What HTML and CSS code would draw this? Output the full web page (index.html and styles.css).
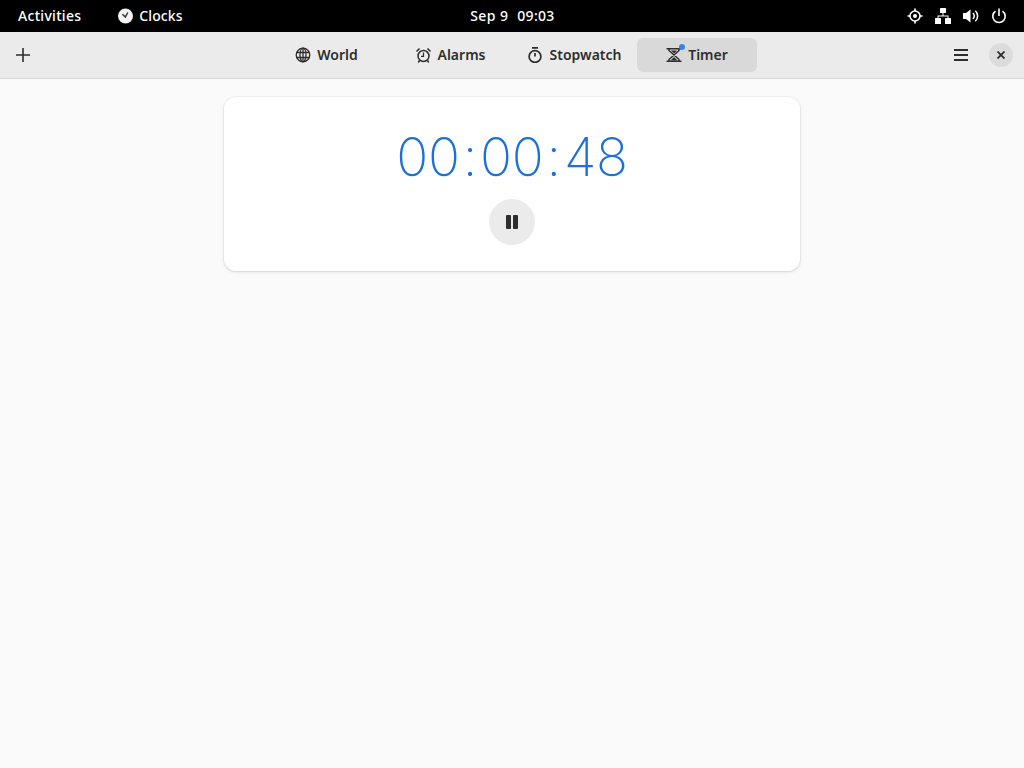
FILE: index.html
```html
<!DOCTYPE html>
<html lang="en">
<head>
    <meta charset="UTF-8">
    <meta name="viewport" content="width=device-width, initial-scale=1.0">
    <title>Clocks</title>
    <link rel="stylesheet" href="styles.css">
</head>
<body>
    <div class="top_bar">
        <div class="top_left">
            <span class="activities">Activities</span>
            <span class="app_menu">
                <svg class="app_icon" width="16" height="16" viewBox="0 0 16 16">
                    <circle cx="7.500" cy="8" r="7.500" fill="#f2f2f2"/>
                    <path d="M4.500 6.300 L7.300 9 L9.800 4.500" fill="none" stroke="#333" stroke-width="1.500"/>
                </svg>
                Clocks
            </span>
        </div>
        <div class="top_clock">Sep 9&nbsp; 09:03</div>
        <div class="top_right">
            <svg width="16" height="16" viewBox="0 0 16 16" fill="none" stroke="#fff">
                <circle cx="8" cy="8" r="5" stroke-width="1.6"/>
                <circle cx="8" cy="8" r="2" fill="#fff" stroke="none"/>
                <path d="M8 0.500V3M8 13v2.500M0.500 8H3M13 8h2.500" stroke-width="1.6"/>
            </svg>
            <svg width="16" height="16" viewBox="0 0 16 16" fill="#fff">
                <rect x="5" y="0" width="6" height="5" rx="0.5"/>
                <rect x="0" y="10" width="6" height="6" rx="0.5"/>
                <rect x="10" y="10" width="6" height="6" rx="0.5"/>
                <path d="M7.500 5h1v2.500H13.500V10h-1V8.500h-9V10h-1V7.500h5z"/>
            </svg>
            <svg width="16" height="16" viewBox="0 0 16 16">
                <path d="M0 5H3L7.500 1.500v13L3 11H0z" fill="#fff"/>
                <path d="M9.800 5a3.800 3.800 0 0 1 0 6M12.300 2.800a7 7 0 0 1 0 10.400" fill="none" stroke="#fff" stroke-width="1.500"/>
            </svg>
            <svg width="16" height="16" viewBox="0 0 16 16" fill="none" stroke="#fff" stroke-width="1.600">
                <path d="M4.500 3.200a6.200 6.200 0 1 0 7 0"/>
                <path d="M8 0.500V8"/>
            </svg>
        </div>
    </div>

    <header class="header_bar">
        <button class="icon_btn add_btn">
            <svg width="16" height="16" viewBox="0 0 16 16" fill="none" stroke="#2e2e2e" stroke-width="1.600">
                <path d="M8 1v14M1 8h14"/>
            </svg>
        </button>
        <nav class="tabs">
            <div class="tab">
                <svg width="16" height="16" viewBox="0 0 16 16" fill="none" stroke="#2e2e2e" stroke-width="1.300">
                    <circle cx="8" cy="8" r="6.800"/>
                    <ellipse cx="8" cy="8" rx="3" ry="6.800"/>
                    <path d="M1.500 5.500h13M1.500 10.500h13M8 1v14"/>
                </svg>
                World
            </div>
            <div class="tab">
                <svg width="16" height="16" viewBox="0 0 16 16" fill="none" stroke="#2e2e2e" stroke-width="1.500">
                    <circle cx="7.500" cy="9" r="5.500"/>
                    <path d="M7.500 5.500V9.300H5" stroke-width="1.200"/>
                    <path d="M0.500 4.500L3.500 1.500M14.500 4.500L11.500 1.500M3.500 13.500L2.300 15.500M11.500 13.500L12.700 15.500"/>
                </svg>
                Alarms
            </div>
            <div class="tab">
                <svg width="16" height="16" viewBox="0 0 16 16" fill="none" stroke="#2e2e2e" stroke-width="1.700">
                    <circle cx="7" cy="9.500" r="5.900"/>
                    <path d="M4 0.900h6M7 6v3.500"/>
                </svg>
                Stopwatch
            </div>
            <div class="tab active">
                <span class="tab_icon">
                    <svg width="16" height="16" viewBox="0 0 16 16" fill="none" stroke="#2e2e2e" stroke-width="1.500">
                        <path d="M0.500 1.800h15M0.500 14.200h15"/>
                        <path d="M3 2v1.500L13 12.500V14M13 2v1.500L3 12.500V14"/>
                        <path d="M5 3.500h6L8 6.500zM4.500 13.500L8 10l3.500 3.500z" fill="#2e2e2e" stroke="none"/>
                    </svg>
                    <span class="badge"></span>
                </span>
                Timer
            </div>
        </nav>
        <div class="header_right">
            <button class="icon_btn">
                <svg width="16" height="16" viewBox="0 0 16 16" fill="none" stroke="#2e2e2e" stroke-width="2">
                    <path d="M1 3h14M1 8h14M1 13h14"/>
                </svg>
            </button>
            <button class="close_btn">
                <svg width="8" height="8" viewBox="0 0 8 8" fill="none" stroke="#2e2e2e" stroke-width="1.800">
                    <path d="M0.500 0.500l7 7M7.500 0.500l-7 7"/>
                </svg>
            </button>
        </div>
    </header>

    <main class="content">
        <section class="timer_card">
            <div class="countdown">
                <span>00</span><span class="colon">:</span><span>00</span><span class="colon">:</span><span>48</span>
            </div>
            <button class="pause_btn">
                <svg width="12" height="14" viewBox="0 0 12 14" fill="#2e2e2e">
                    <rect x="0" y="0" width="5" height="14" rx="1"/>
                    <rect x="7" y="0" width="5" height="14" rx="1"/>
                </svg>
            </button>
        </section>
    </main>
</body>
</html>
```

FILE: styles.css
```css
* {
    margin: 0;
    padding: 0;
    box-sizing: border-box;
}

html, body {
    height: 100%;
    overflow: hidden;
}

body {
    display: flex;
    flex-direction: column;
    background-color: #fafafa;
    color: #2e2e2e;
    font-family: "Noto Sans", "Open Sans", sans-serif;
}

button {
    border: none;
    background: none;
    display: flex;
    align-items: center;
    justify-content: center;
}

svg {
    display: block;
    flex: none;
}

/* gnome shell panel */
.top_bar {
    height: 32px;
    flex: none;
    display: grid;
    grid-template-columns: 1fr auto 1fr;
    align-items: center;
    background-color: #000;
    color: #fff;
    font-size: 14px;
    font-weight: 500;
    letter-spacing: 0.3px;
    padding: 0 17px 1px 18px;
}

.top_left {
    display: flex;
    align-items: center;
    gap: 37px;
}

.app_menu {
    display: flex;
    align-items: center;
    gap: 5px;
    letter-spacing: 0.1px;
}

.top_clock {
    word-spacing: 0.5px;
}

.top_right {
    display: flex;
    justify-content: flex-end;
    gap: 12px;
}

/* window header */
.header_bar {
    height: 47px;
    flex: none;
    display: grid;
    grid-template-columns: 1fr auto 1fr;
    align-items: center;
    background-color: #ebebeb;
    border-bottom: 1px solid #d6d6d6;
    padding: 0 11px 1px 9px;
}

.add_btn {
    justify-content: flex-start;
    padding-left: 6px;
}

.tabs {
    display: flex;
    gap: 4px;
}

.tab {
    width: 120px;
    height: 34px;
    display: flex;
    align-items: center;
    justify-content: center;
    gap: 6px;
    padding-left: 3px;
    border-radius: 6px;
    font-size: 14px;
    font-weight: 600;
    color: #2e2e2e;
}

.tab.active {
    padding-left: 0;
    background-color: #d9d9d9;
}

.tab_icon {
    position: relative;
    display: block;
}

.badge {
    position: absolute;
    top: -3px;
    right: -3px;
    width: 6px;
    height: 6px;
    border-radius: 50%;
    background-color: #3584e4;
}

.header_right {
    display: flex;
    justify-content: flex-end;
    align-items: center;
    gap: 20px;
}

.close_btn {
    width: 24px;
    height: 24px;
    border-radius: 50%;
    background-color: #dcdcdc;
}

/* timer */
.content {
    flex: 1;
    display: flex;
    justify-content: center;
    padding-top: 18px;
}

.timer_card {
    width: 576px;
    height: 174px;
    display: flex;
    flex-direction: column;
    align-items: center;
    background-color: #fff;
    border-radius: 12px;
    box-shadow: 0 0 0 1px rgba(0, 0, 0, 0.03), 0 1px 3px rgba(0, 0, 0, 0.14);
    padding-top: 28px;
}

.countdown {
    height: 64px;
    display: flex;
    gap: 3px;
    font-family: "Inter", sans-serif;
    font-weight: 200;
    font-size: 53px;
    letter-spacing: -0.3px;
    line-height: 64px;
    color: #1c71d8;
}

.pause_btn {
    width: 46px;
    height: 46px;
    margin-top: 10px;
    border-radius: 50%;
    background-color: #ebebeb;
}
```
